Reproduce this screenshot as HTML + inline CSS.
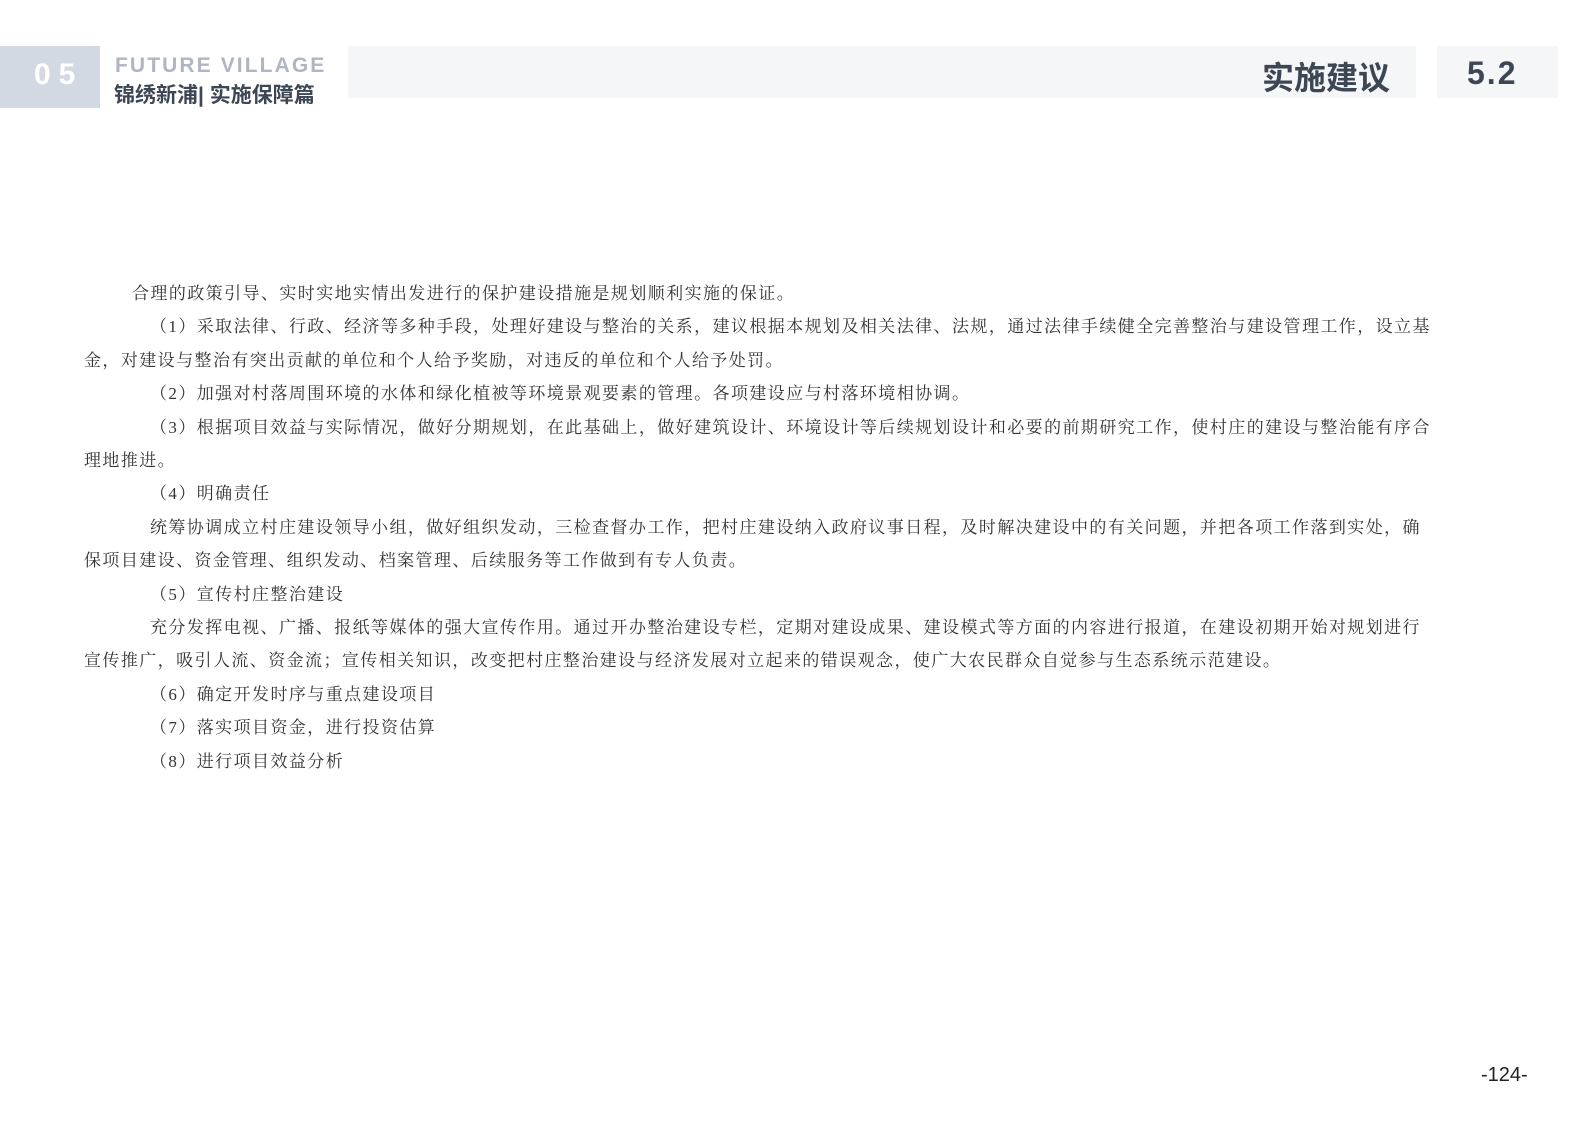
<!DOCTYPE html>
<html><head><meta charset="utf-8"><style>
body{margin:0;width:1588px;height:1123px;background:#fff;position:relative;overflow:hidden;font-family:"Liberation Serif","Noto Serif CJK SC",serif;}
.a{position:absolute}
.p{position:absolute;left:84px;width:1450px;font-size:17px;line-height:33.4px;color:#333;white-space:nowrap;letter-spacing:1.42px}
</style></head><body>
<div class="a" style="left:0;top:46px;width:100px;height:62px;background:#d3d9e2"></div>
<div class="a" style="left:34px;top:58px;font:bold 30px 'Liberation Sans',sans-serif;color:#fff;letter-spacing:8px">05</div>
<div class="a" style="left:348px;top:46px;width:1068px;height:52px;background:#f5f6f8"></div>
<div class="a" style="left:1437px;top:46px;width:121px;height:52px;background:#f5f6f8"></div>
<div class="a" style="left:115px;top:54px;font:bold 21px 'Liberation Sans',sans-serif;color:#aeb5c3;letter-spacing:2.1px">FUTURE VILLAGE</div>
<div class="a" style="left:114px;top:79px;font:bold 21px 'Liberation Sans','Noto Sans CJK SC',sans-serif;color:#3d4654">锦绣新浦| 实施保障篇</div>
<div class="a" style="left:1262px;top:53px;font:bold 32px 'Liberation Sans','Noto Sans CJK SC',sans-serif;color:#3d4654">实施建议</div>
<div class="a" style="left:1467px;top:55px;font:bold 32px 'Liberation Sans',sans-serif;color:#3d4654;letter-spacing:2px">5.2</div>
<div class="p" style="top:277px">
<div style="padding-left:48px">合理的政策引导、实时实地实情出发进行的保护建设措施是规划顺利实施的保证。</div>
<div style="padding-left:66px">（1）采取法律、行政、经济等多种手段，处理好建设与整治的关系，建议根据本规划及相关法律、法规，通过法律手续健全完善整治与建设管理工作，设立基</div>
<div>金，对建设与整治有突出贡献的单位和个人给予奖励，对违反的单位和个人给予处罚。</div>
<div style="padding-left:66px">（2）加强对村落周围环境的水体和绿化植被等环境景观要素的管理。各项建设应与村落环境相协调。</div>
<div style="padding-left:66px">（3）根据项目效益与实际情况，做好分期规划，在此基础上，做好建筑设计、环境设计等后续规划设计和必要的前期研究工作，使村庄的建设与整治能有序合</div>
<div>理地推进。</div>
<div style="padding-left:66px">（4）明确责任</div>
<div style="padding-left:66px">统筹协调成立村庄建设领导小组，做好组织发动，三检查督办工作，把村庄建设纳入政府议事日程，及时解决建设中的有关问题，并把各项工作落到实处，确</div>
<div>保项目建设、资金管理、组织发动、档案管理、后续服务等工作做到有专人负责。</div>
<div style="padding-left:66px">（5）宣传村庄整治建设</div>
<div style="padding-left:66px">充分发挥电视、广播、报纸等媒体的强大宣传作用。通过开办整治建设专栏，定期对建设成果、建设模式等方面的内容进行报道，在建设初期开始对规划进行</div>
<div>宣传推广，吸引人流、资金流；宣传相关知识，改变把村庄整治建设与经济发展对立起来的错误观念，使广大农民群众自觉参与生态系统示范建设。</div>
<div style="padding-left:66px">（6）确定开发时序与重点建设项目</div>
<div style="padding-left:66px">（7）落实项目资金，进行投资估算</div>
<div style="padding-left:66px">（8）进行项目效益分析</div>
</div>
<div class="a" style="left:1481px;top:1064px;font:20px 'Liberation Sans',sans-serif;color:#222">-124-</div>
</body></html>
